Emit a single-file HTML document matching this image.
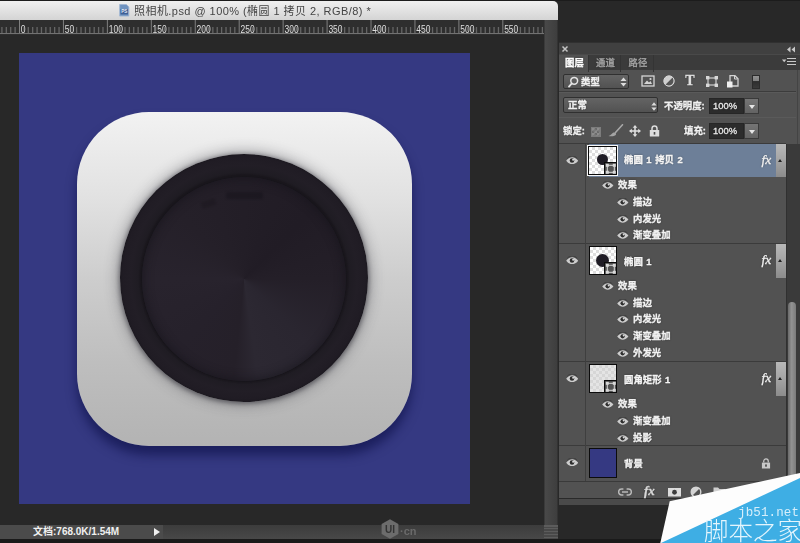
<!DOCTYPE html>
<html lang="zh">
<head>
<meta charset="utf-8">
<title>照相机.psd</title>
<style>
*{margin:0;padding:0;box-sizing:border-box}
html,body{width:800px;height:543px;overflow:hidden;background:#282828}
body{position:relative;font-family:"Liberation Sans","Noto Sans CJK SC",sans-serif;font-size:9.4px;color:#ececec}
#root{left:0;top:0;width:800px;height:543px;overflow:hidden;filter:blur(0.3px)}
.abs{position:absolute}
svg{display:block}
#topline{left:0;top:0;width:800px;height:1px;background:#1c1c1c}
#titlebar{left:0;top:1px;width:558px;height:19px;background:linear-gradient(#f0f0f0,#d4d4d4);border-top-right-radius:5px;color:#4a4a4a;font-size:11px;line-height:19px}
#title{left:134px;top:1px;white-space:nowrap;letter-spacing:0.45px;color:#444}
#ruler{left:0;top:20px}
#vscroll{left:544px;top:20px;width:14px;height:505px;background:linear-gradient(90deg,#494949,#3e3e3e);border-left:1px solid #3a3a3a;border-right:1px solid #333}
#canvas{left:0;top:35px;width:544px;height:490px;background:#282828}
#doc{left:19px;top:53.4px;width:451.2px;height:450.6px;background:#353982;overflow:hidden}
#icon{left:58px;top:58.6px;width:334.5px;height:334px;border-radius:72px;background:linear-gradient(#f2f2f2 0%,#e2e2e2 25%,#cdcdcd 50%,#bebebe 75%,#b3b3b3 100%);box-shadow:0 9px 11px rgba(12,14,70,.62)}
#ring{left:42.5px;top:42.5px;width:248px;height:248px;border-radius:50%;background:radial-gradient(circle at 50% 50%,#1a171d 0,#1a171d 103px,#1f1c23 106px,#221e26 113px,#201c24 121px,#1c1920 124px);box-shadow:0 0 13px 3px rgba(56,56,62,.38),0 1px 4px 1px rgba(24,22,30,.45)}
#disc{left:22px;top:22.5px;width:204px;height:204px;border-radius:50%;background:conic-gradient(from 0deg,#231e27,#211c25 45deg,#241f28 90deg,#2a2630 135deg,#2c2832 172deg,#252029 186deg,#26212b 225deg,#28232d 270deg,#252029 315deg,#231e27);box-shadow:0 0 1.5px 0.5px rgba(20,18,24,.7),inset 0 0 8px 2px rgba(20,18,26,.55)}
#wm{left:84px;top:15.5px;width:37px;height:6.5px;border-radius:2px;background:rgba(18,15,22,.36);filter:blur(1px)}
#wm2{left:59px;top:23px;width:15px;height:6.5px;border-radius:2px;background:rgba(18,15,22,.28);transform:rotate(-18deg);filter:blur(1px)}
#status{left:0;top:525px;width:558px;height:14px;background:linear-gradient(#3c3c3c,#484848);font-size:10px;line-height:14px;color:#f0f0f0}
#status .l{left:0;top:0;width:163px;height:14px;background:#4b4b4b}
#status .t{left:33px;top:0;white-space:nowrap;font-weight:bold}
#grip{left:544px;top:0;width:14px;height:14px;background:repeating-linear-gradient(#5c5c5c 0,#5c5c5c 1.5px,#484848 1.5px,#484848 3px)}
#bottom{left:0;top:539px;width:800px;height:4px;background:#1a1a1a}
/* panel */
#panel{left:559px;top:42px;width:241px;height:463px;background:#525252;overflow:hidden;-webkit-text-stroke:0.3px currentColor;text-shadow:0 0 2px rgba(30,30,30,.6)}
#phead{left:0;top:0;width:241px;height:12px;background:#404040;border-top:1px solid #303030}
#ptabs{left:0;top:12px;width:241px;height:16px;background:#3b3b3b;border-top:1px solid #494949}
.tab{position:absolute;top:0;height:17px;line-height:16px;padding-left:2px;font-size:9.4px;color:#a8a8a8;text-align:center;border-right:1px solid #343434}
.tab.on{background:#525252;color:#fff;font-weight:bold}
.hsep{position:absolute;left:0;width:237px;height:2px;background:#3c3c3c;border-bottom:1px solid #5a5a5a}
.dd{position:absolute;height:15px;border:1px solid #303030;border-radius:2px;background:linear-gradient(#646464,#525252);line-height:14px;font-size:9.4px;color:#f2f2f2;font-weight:bold}
.lbl{position:absolute;white-space:nowrap;font-size:9.4px;font-weight:bold;color:#f0f0f0;line-height:16px}
.inp{position:absolute;width:35px;height:16px;background:#2c2c2c;border:1px solid #262626;color:#e8e8e8;font-size:9.4px;line-height:14px;padding-left:3px}
.btn{position:absolute;width:15px;height:16px;background:linear-gradient(#757575,#636363);border:1px solid #3a3a3a}
.btn i{position:absolute;left:4px;top:6px;border:3px solid transparent;border-top:4px solid #e6e6e6;border-bottom:0}
#list{left:0;top:102px;width:227px;height:338px}
.layer{position:absolute;left:0;width:227px;border-top:1px solid #3b3b3b}
.layer.sel{background:linear-gradient(90deg,#525252 0,#525252 30px,#6d7f98 30px)}
.thumb{position:absolute;left:30.3px;top:2.2px;width:27.3px;border:1.2px solid #0c0c0c;overflow:hidden}
.thumb.tsel{left:29px;top:1.6px;width:29px;outline:1.5px solid #f6f6f6}
.lname{position:absolute;left:65px;word-spacing:1px;top:0;font-size:9.4px;font-weight:bold;color:#f4f4f4;white-space:nowrap}
.fx{position:absolute;left:202.5px;top:0;font-family:"Liberation Serif",serif;font-style:italic;font-size:13.5px;color:#f0f0f0}
.tog{position:absolute;left:217px;top:0;width:9.5px;background:linear-gradient(#b8b8b8,#a6a6a6 45%,#8c8c8c);}
.tog i{position:absolute;left:2px;top:14.5px;border:2.8px solid transparent;border-bottom:3.5px solid #222;border-top:0}
.eff{position:absolute;left:0;width:227px;height:16px}
.ename{position:absolute;top:0;line-height:16px;font-size:9.4px;font-weight:bold;color:#f2f2f2;white-space:nowrap}
.sep{position:absolute;left:0;width:227px;height:1px;background:#3b3b3b}
.vline{position:absolute;top:102px;width:1px;height:338px;background:#3f3f3f}
#track{left:227px;top:102px;width:14px;height:363px;background:#3a3a3a;border-left:1px solid #303030}
#thumbv{left:1px;top:158px;width:8px;height:220px;border-radius:4px;background:linear-gradient(90deg,#6a6a6a,#929292 45%,#7a7a7a)}
#pfoot{left:0;top:439px;width:227px;height:18px;border-top:1px solid #3a3a3a;border-bottom:1px solid #2a2a2a;background:#525252}
#pedge{left:238px;top:28px;width:1px;height:74px;background:#444}
#pfoot2{left:0;top:457px;width:241px;height:6px;background:#4a4a4a}
</style>
</head>
<body>
<div id="root" class="abs">
<div id="topline" class="abs"></div>
<div id="titlebar" class="abs">
<svg class="abs" style="left:119px;top:3px" width="10.5" height="12.5" viewBox="0 0 12 15"><path d="M0.5 0.5 H8.5 L11.5 3.5 V14.5 H0.5 Z" fill="#6f93c0" stroke="#9db4d2" stroke-width="1"/><rect x="1.5" y="6" width="9" height="6.5" fill="#3f6096"/><text x="6" y="11.3" font-family="Liberation Sans, sans-serif" font-size="5.5" font-weight="bold" fill="#e6edf6" text-anchor="middle">PS</text></svg>
<span id="title" class="abs">照相机.psd @ 100% (椭圆 1 拷贝 2, RGB/8) *</span></div>
<svg id="ruler" class="abs" width="544" height="15" viewBox="0 0 544 15"><rect width="544" height="15" fill="#2e2e2e"/><line x1="1.92" y1="7" x2="1.92" y2="14" stroke="#666" stroke-width="1.3"/><line x1="6.32" y1="7" x2="6.32" y2="14" stroke="#666" stroke-width="1.3"/><line x1="10.71" y1="7" x2="10.71" y2="14" stroke="#666" stroke-width="1.3"/><line x1="15.11" y1="7" x2="15.11" y2="14" stroke="#666" stroke-width="1.3"/><line x1="19.50" y1="0" x2="19.50" y2="14" stroke="#808080" stroke-width="1"/><line x1="23.89" y1="7" x2="23.89" y2="14" stroke="#666" stroke-width="1.3"/><line x1="28.29" y1="7" x2="28.29" y2="14" stroke="#666" stroke-width="1.3"/><line x1="32.68" y1="7" x2="32.68" y2="14" stroke="#666" stroke-width="1.3"/><line x1="37.08" y1="7" x2="37.08" y2="14" stroke="#666" stroke-width="1.3"/><line x1="41.47" y1="7" x2="41.47" y2="14" stroke="#666" stroke-width="1.3"/><line x1="45.86" y1="7" x2="45.86" y2="14" stroke="#666" stroke-width="1.3"/><line x1="50.26" y1="7" x2="50.26" y2="14" stroke="#666" stroke-width="1.3"/><line x1="54.65" y1="7" x2="54.65" y2="14" stroke="#666" stroke-width="1.3"/><line x1="59.05" y1="7" x2="59.05" y2="14" stroke="#666" stroke-width="1.3"/><line x1="63.44" y1="0" x2="63.44" y2="14" stroke="#808080" stroke-width="1"/><line x1="67.83" y1="7" x2="67.83" y2="14" stroke="#666" stroke-width="1.3"/><line x1="72.23" y1="7" x2="72.23" y2="14" stroke="#666" stroke-width="1.3"/><line x1="76.62" y1="7" x2="76.62" y2="14" stroke="#666" stroke-width="1.3"/><line x1="81.02" y1="7" x2="81.02" y2="14" stroke="#666" stroke-width="1.3"/><line x1="85.41" y1="7" x2="85.41" y2="14" stroke="#666" stroke-width="1.3"/><line x1="89.80" y1="7" x2="89.80" y2="14" stroke="#666" stroke-width="1.3"/><line x1="94.20" y1="7" x2="94.20" y2="14" stroke="#666" stroke-width="1.3"/><line x1="98.59" y1="7" x2="98.59" y2="14" stroke="#666" stroke-width="1.3"/><line x1="102.99" y1="7" x2="102.99" y2="14" stroke="#666" stroke-width="1.3"/><line x1="107.38" y1="0" x2="107.38" y2="14" stroke="#808080" stroke-width="1"/><line x1="111.77" y1="7" x2="111.77" y2="14" stroke="#666" stroke-width="1.3"/><line x1="116.17" y1="7" x2="116.17" y2="14" stroke="#666" stroke-width="1.3"/><line x1="120.56" y1="7" x2="120.56" y2="14" stroke="#666" stroke-width="1.3"/><line x1="124.96" y1="7" x2="124.96" y2="14" stroke="#666" stroke-width="1.3"/><line x1="129.35" y1="7" x2="129.35" y2="14" stroke="#666" stroke-width="1.3"/><line x1="133.74" y1="7" x2="133.74" y2="14" stroke="#666" stroke-width="1.3"/><line x1="138.14" y1="7" x2="138.14" y2="14" stroke="#666" stroke-width="1.3"/><line x1="142.53" y1="7" x2="142.53" y2="14" stroke="#666" stroke-width="1.3"/><line x1="146.93" y1="7" x2="146.93" y2="14" stroke="#666" stroke-width="1.3"/><line x1="151.32" y1="0" x2="151.32" y2="14" stroke="#808080" stroke-width="1"/><line x1="155.71" y1="7" x2="155.71" y2="14" stroke="#666" stroke-width="1.3"/><line x1="160.11" y1="7" x2="160.11" y2="14" stroke="#666" stroke-width="1.3"/><line x1="164.50" y1="7" x2="164.50" y2="14" stroke="#666" stroke-width="1.3"/><line x1="168.90" y1="7" x2="168.90" y2="14" stroke="#666" stroke-width="1.3"/><line x1="173.29" y1="7" x2="173.29" y2="14" stroke="#666" stroke-width="1.3"/><line x1="177.68" y1="7" x2="177.68" y2="14" stroke="#666" stroke-width="1.3"/><line x1="182.08" y1="7" x2="182.08" y2="14" stroke="#666" stroke-width="1.3"/><line x1="186.47" y1="7" x2="186.47" y2="14" stroke="#666" stroke-width="1.3"/><line x1="190.87" y1="7" x2="190.87" y2="14" stroke="#666" stroke-width="1.3"/><line x1="195.26" y1="0" x2="195.26" y2="14" stroke="#808080" stroke-width="1"/><line x1="199.65" y1="7" x2="199.65" y2="14" stroke="#666" stroke-width="1.3"/><line x1="204.05" y1="7" x2="204.05" y2="14" stroke="#666" stroke-width="1.3"/><line x1="208.44" y1="7" x2="208.44" y2="14" stroke="#666" stroke-width="1.3"/><line x1="212.84" y1="7" x2="212.84" y2="14" stroke="#666" stroke-width="1.3"/><line x1="217.23" y1="7" x2="217.23" y2="14" stroke="#666" stroke-width="1.3"/><line x1="221.62" y1="7" x2="221.62" y2="14" stroke="#666" stroke-width="1.3"/><line x1="226.02" y1="7" x2="226.02" y2="14" stroke="#666" stroke-width="1.3"/><line x1="230.41" y1="7" x2="230.41" y2="14" stroke="#666" stroke-width="1.3"/><line x1="234.81" y1="7" x2="234.81" y2="14" stroke="#666" stroke-width="1.3"/><line x1="239.20" y1="0" x2="239.20" y2="14" stroke="#808080" stroke-width="1"/><line x1="243.59" y1="7" x2="243.59" y2="14" stroke="#666" stroke-width="1.3"/><line x1="247.99" y1="7" x2="247.99" y2="14" stroke="#666" stroke-width="1.3"/><line x1="252.38" y1="7" x2="252.38" y2="14" stroke="#666" stroke-width="1.3"/><line x1="256.78" y1="7" x2="256.78" y2="14" stroke="#666" stroke-width="1.3"/><line x1="261.17" y1="7" x2="261.17" y2="14" stroke="#666" stroke-width="1.3"/><line x1="265.56" y1="7" x2="265.56" y2="14" stroke="#666" stroke-width="1.3"/><line x1="269.96" y1="7" x2="269.96" y2="14" stroke="#666" stroke-width="1.3"/><line x1="274.35" y1="7" x2="274.35" y2="14" stroke="#666" stroke-width="1.3"/><line x1="278.75" y1="7" x2="278.75" y2="14" stroke="#666" stroke-width="1.3"/><line x1="283.14" y1="0" x2="283.14" y2="14" stroke="#808080" stroke-width="1"/><line x1="287.53" y1="7" x2="287.53" y2="14" stroke="#666" stroke-width="1.3"/><line x1="291.93" y1="7" x2="291.93" y2="14" stroke="#666" stroke-width="1.3"/><line x1="296.32" y1="7" x2="296.32" y2="14" stroke="#666" stroke-width="1.3"/><line x1="300.72" y1="7" x2="300.72" y2="14" stroke="#666" stroke-width="1.3"/><line x1="305.11" y1="7" x2="305.11" y2="14" stroke="#666" stroke-width="1.3"/><line x1="309.50" y1="7" x2="309.50" y2="14" stroke="#666" stroke-width="1.3"/><line x1="313.90" y1="7" x2="313.90" y2="14" stroke="#666" stroke-width="1.3"/><line x1="318.29" y1="7" x2="318.29" y2="14" stroke="#666" stroke-width="1.3"/><line x1="322.69" y1="7" x2="322.69" y2="14" stroke="#666" stroke-width="1.3"/><line x1="327.08" y1="0" x2="327.08" y2="14" stroke="#808080" stroke-width="1"/><line x1="331.47" y1="7" x2="331.47" y2="14" stroke="#666" stroke-width="1.3"/><line x1="335.87" y1="7" x2="335.87" y2="14" stroke="#666" stroke-width="1.3"/><line x1="340.26" y1="7" x2="340.26" y2="14" stroke="#666" stroke-width="1.3"/><line x1="344.66" y1="7" x2="344.66" y2="14" stroke="#666" stroke-width="1.3"/><line x1="349.05" y1="7" x2="349.05" y2="14" stroke="#666" stroke-width="1.3"/><line x1="353.44" y1="7" x2="353.44" y2="14" stroke="#666" stroke-width="1.3"/><line x1="357.84" y1="7" x2="357.84" y2="14" stroke="#666" stroke-width="1.3"/><line x1="362.23" y1="7" x2="362.23" y2="14" stroke="#666" stroke-width="1.3"/><line x1="366.63" y1="7" x2="366.63" y2="14" stroke="#666" stroke-width="1.3"/><line x1="371.02" y1="0" x2="371.02" y2="14" stroke="#808080" stroke-width="1"/><line x1="375.41" y1="7" x2="375.41" y2="14" stroke="#666" stroke-width="1.3"/><line x1="379.81" y1="7" x2="379.81" y2="14" stroke="#666" stroke-width="1.3"/><line x1="384.20" y1="7" x2="384.20" y2="14" stroke="#666" stroke-width="1.3"/><line x1="388.60" y1="7" x2="388.60" y2="14" stroke="#666" stroke-width="1.3"/><line x1="392.99" y1="7" x2="392.99" y2="14" stroke="#666" stroke-width="1.3"/><line x1="397.38" y1="7" x2="397.38" y2="14" stroke="#666" stroke-width="1.3"/><line x1="401.78" y1="7" x2="401.78" y2="14" stroke="#666" stroke-width="1.3"/><line x1="406.17" y1="7" x2="406.17" y2="14" stroke="#666" stroke-width="1.3"/><line x1="410.57" y1="7" x2="410.57" y2="14" stroke="#666" stroke-width="1.3"/><line x1="414.96" y1="0" x2="414.96" y2="14" stroke="#808080" stroke-width="1"/><line x1="419.35" y1="7" x2="419.35" y2="14" stroke="#666" stroke-width="1.3"/><line x1="423.75" y1="7" x2="423.75" y2="14" stroke="#666" stroke-width="1.3"/><line x1="428.14" y1="7" x2="428.14" y2="14" stroke="#666" stroke-width="1.3"/><line x1="432.54" y1="7" x2="432.54" y2="14" stroke="#666" stroke-width="1.3"/><line x1="436.93" y1="7" x2="436.93" y2="14" stroke="#666" stroke-width="1.3"/><line x1="441.32" y1="7" x2="441.32" y2="14" stroke="#666" stroke-width="1.3"/><line x1="445.72" y1="7" x2="445.72" y2="14" stroke="#666" stroke-width="1.3"/><line x1="450.11" y1="7" x2="450.11" y2="14" stroke="#666" stroke-width="1.3"/><line x1="454.51" y1="7" x2="454.51" y2="14" stroke="#666" stroke-width="1.3"/><line x1="458.90" y1="0" x2="458.90" y2="14" stroke="#808080" stroke-width="1"/><line x1="463.29" y1="7" x2="463.29" y2="14" stroke="#666" stroke-width="1.3"/><line x1="467.69" y1="7" x2="467.69" y2="14" stroke="#666" stroke-width="1.3"/><line x1="472.08" y1="7" x2="472.08" y2="14" stroke="#666" stroke-width="1.3"/><line x1="476.48" y1="7" x2="476.48" y2="14" stroke="#666" stroke-width="1.3"/><line x1="480.87" y1="7" x2="480.87" y2="14" stroke="#666" stroke-width="1.3"/><line x1="485.26" y1="7" x2="485.26" y2="14" stroke="#666" stroke-width="1.3"/><line x1="489.66" y1="7" x2="489.66" y2="14" stroke="#666" stroke-width="1.3"/><line x1="494.05" y1="7" x2="494.05" y2="14" stroke="#666" stroke-width="1.3"/><line x1="498.45" y1="7" x2="498.45" y2="14" stroke="#666" stroke-width="1.3"/><line x1="502.84" y1="0" x2="502.84" y2="14" stroke="#808080" stroke-width="1"/><line x1="507.23" y1="7" x2="507.23" y2="14" stroke="#666" stroke-width="1.3"/><line x1="511.63" y1="7" x2="511.63" y2="14" stroke="#666" stroke-width="1.3"/><line x1="516.02" y1="7" x2="516.02" y2="14" stroke="#666" stroke-width="1.3"/><line x1="520.42" y1="7" x2="520.42" y2="14" stroke="#666" stroke-width="1.3"/><line x1="524.81" y1="7" x2="524.81" y2="14" stroke="#666" stroke-width="1.3"/><line x1="529.20" y1="7" x2="529.20" y2="14" stroke="#666" stroke-width="1.3"/><line x1="533.60" y1="7" x2="533.60" y2="14" stroke="#666" stroke-width="1.3"/><line x1="537.99" y1="7" x2="537.99" y2="14" stroke="#666" stroke-width="1.3"/><line x1="542.39" y1="7" x2="542.39" y2="14" stroke="#666" stroke-width="1.3"/><g font-family="Liberation Sans, sans-serif" font-size="11" fill="#dedede" stroke="#2e2e2e" stroke-width="1.6" paint-order="stroke"><text x="20.80" y="12.6" textLength="4.8" lengthAdjust="spacingAndGlyphs">0</text><text x="64.74" y="12.6" textLength="9.5" lengthAdjust="spacingAndGlyphs">50</text><text x="108.68" y="12.6" textLength="14.2" lengthAdjust="spacingAndGlyphs">100</text><text x="152.62" y="12.6" textLength="14.2" lengthAdjust="spacingAndGlyphs">150</text><text x="196.56" y="12.6" textLength="14.2" lengthAdjust="spacingAndGlyphs">200</text><text x="240.50" y="12.6" textLength="14.2" lengthAdjust="spacingAndGlyphs">250</text><text x="284.44" y="12.6" textLength="14.2" lengthAdjust="spacingAndGlyphs">300</text><text x="328.38" y="12.6" textLength="14.2" lengthAdjust="spacingAndGlyphs">350</text><text x="372.32" y="12.6" textLength="14.2" lengthAdjust="spacingAndGlyphs">400</text><text x="416.26" y="12.6" textLength="14.2" lengthAdjust="spacingAndGlyphs">450</text><text x="460.20" y="12.6" textLength="14.2" lengthAdjust="spacingAndGlyphs">500</text><text x="504.14" y="12.6" textLength="14.2" lengthAdjust="spacingAndGlyphs">550</text></g><rect y="13" width="544" height="1" fill="#727272"/></svg>
<div id="canvas" class="abs"></div>
<div id="vscroll" class="abs"></div>
<div id="doc" class="abs">
 <div id="icon" class="abs">
  <div id="ring" class="abs">
   <div id="disc" class="abs"><div id="wm" class="abs"></div><div id="wm2" class="abs"></div></div>
  </div>
 </div>
</div>
<div id="status" class="abs"><div class="l abs"></div><span class="t abs">文档:768.0K/1.54M</span>
<span class="abs" style="left:154px;top:3px;border:4px solid transparent;border-left:6px solid #f0f0f0;border-right:0"></span>
<div id="grip" class="abs"></div></div>
<div id="bottom" class="abs"></div>
<svg id="uicn" class="abs" style="left:379px;top:518px" width="40" height="22" viewBox="0 0 40 22"><path d="M11 1.2 L19.4 6 V16 L11 20.8 L2.6 16 V6 Z" fill="#6c6c6c"/><text x="11" y="14.6" text-anchor="middle" font-family="Liberation Sans, sans-serif" font-weight="bold" font-size="10" fill="#333">UI</text><text x="21" y="17" font-family="Liberation Sans, sans-serif" font-weight="bold" font-size="11" fill="#6a6a6a">·cn</text></svg>
<div id="panel" class="abs">
 <div id="phead" class="abs"><svg class="abs" style="left:2px;top:2px" width="8" height="8" viewBox="0 0 8 8"><path d="M1.5 1.5 L6.5 6.5 M6.5 1.5 L1.5 6.5" stroke="#c4c4c4" stroke-width="1.5"/></svg>
<svg class="abs" style="left:227px;top:3px" width="10" height="7" viewBox="0 0 10 7"><path d="M4.5 0.5 L1 3.5 L4.5 6.5 Z M9 0.5 L5.5 3.5 L9 6.5 Z" fill="#c8c8c8"/></svg></div>
 <div id="ptabs" class="abs">
  <span class="tab on" style="left:0;width:30px">图层</span>
  <span class="tab" style="left:30px;width:32px">通道</span>
  <span class="tab" style="left:62px;width:33px">路径</span><svg class="abs" style="left:223px;top:2px" width="15" height="9" viewBox="0 0 15 9"><path d="M0 2.5 H4.4 L2.2 5.2 Z" fill="#c8c8c8"/><path d="M5 1.5 H14 M5 4.5 H14 M5 7.5 H14" stroke="#c8c8c8" stroke-width="1.2"/></svg>
 </div>
 <div class="dd" style="left:4px;top:32px;width:66px"></div>
 <span class="lbl" style="left:22px;top:31.5px">类型</span>
 <div class="hsep" style="top:49px"></div>
 <div class="dd" style="left:4px;top:55px;width:95px;height:16px"></div>
 <span class="lbl" style="left:9px;top:55px">正常</span>
 <span class="lbl" style="left:105px;top:56px">不透明度:</span>
 <div class="inp" style="left:150px;top:56px">100%</div><div class="btn" style="left:185px;top:56px"><i></i></div>
 <div class="hsep" style="top:75px;height:1px"></div>
 <span class="lbl" style="left:4px;top:81px">锁定:</span>
 <span class="lbl" style="left:125px;top:81px">填充:</span>
 <div class="inp" style="left:150px;top:81px">100%</div><div class="btn" style="left:185px;top:81px"><i></i></div>

 <svg class="abs" style="left:9px;top:34px" width="11" height="12" viewBox="0 0 11 12"><circle cx="6.2" cy="4.8" r="3.4" fill="none" stroke="#e4e4e4" stroke-width="1.5"/><path d="M3.8 7.4 L1 10.6" stroke="#e4e4e4" stroke-width="1.8" stroke-linecap="round"/></svg>
 <svg class="abs" style="left:61px;top:35px" width="7" height="10" viewBox="0 0 7 10"><path d="M3.5 0.5 L6.5 4 H0.5 Z M3.5 9.5 L6.5 6 H0.5 Z" fill="#dcdcdc"/></svg>
 <svg class="abs" style="left:82px;top:33px" width="14" height="12" viewBox="0 0 14 12"><rect x="1" y="1" width="12" height="10" fill="none" stroke="#d4d4d4" stroke-width="1.3"/><path d="M3 9 L6 5.5 L8 7.5 L9.5 6 L11 9 Z" fill="#d4d4d4"/><circle cx="9.5" cy="4" r="1.1" fill="#d4d4d4"/></svg>
 <svg class="abs" style="left:104px;top:33px" width="12" height="12" viewBox="0 0 12 12"><circle cx="6" cy="6" r="5.2" fill="#cfcfcf"/><path d="M2.6 9.6 A5 5 0 0 0 9.6 2.6 Z" fill="#555"/><circle cx="6" cy="6" r="5.2" fill="none" stroke="#d6d6d6" stroke-width="1"/></svg>
 <span class="abs" style="left:125px;top:31px;width:12px;text-align:center;font-family:'Liberation Serif',serif;font-weight:bold;font-size:14px;line-height:16px;color:#dedede">T</span>
 <svg class="abs" style="left:147px;top:34px" width="12" height="11" viewBox="0 0 12 11"><rect x="2" y="2" width="8" height="7" fill="none" stroke="#d0d0d0" stroke-width="1.2"/><rect x="0" y="0" width="3.4" height="3.4" fill="#d8d8d8"/><rect x="8.6" y="0" width="3.4" height="3.4" fill="#d8d8d8"/><rect x="0" y="7.6" width="3.4" height="3.4" fill="#d8d8d8"/><rect x="8.6" y="7.6" width="3.4" height="3.4" fill="#d8d8d8"/></svg>
 <svg class="abs" style="left:168px;top:33px" width="12" height="13" viewBox="0 0 12 13"><path d="M3 0.7 H8 L11 3.7 V11 H3 Z" fill="none" stroke="#d4d4d4" stroke-width="1.3"/><path d="M7.5 1 V4 H10.5" fill="none" stroke="#d4d4d4" stroke-width="1"/><rect x="0" y="6.5" width="5.5" height="6" fill="#f0f0f0"/></svg>
 <span class="abs" style="left:193px;top:33px;width:8px;height:14px;border:1px solid #2c2c2c;background:linear-gradient(#929292 0,#808080 42%,#2e2e2e 46%,#3a3a3a 100%)"></span>
 <svg class="abs" style="left:92px;top:60px" width="6" height="9" viewBox="0 0 6 9"><path d="M3 0.3 L5.6 3.4 H0.4 Z M3 8.7 L5.6 5.6 H0.4 Z" fill="#dcdcdc"/></svg>

 <span class="abs" style="left:32px;top:85px;width:10px;height:10px;background-color:#8c8c8c;background-image:linear-gradient(45deg,#6a6a6a 25%,transparent 25%,transparent 75%,#6a6a6a 75%),linear-gradient(45deg,#6a6a6a 25%,transparent 25%,transparent 75%,#6a6a6a 75%);background-size:5px 5px;background-position:0 0,2.5px 2.5px;border:1px solid #7c7c7c"></span>
 <svg class="abs" style="left:49px;top:82px" width="16" height="13" viewBox="0 0 16 13"><path d="M14.5 0.8 L7.5 8.5" stroke="#a8a8a8" stroke-width="1.6" stroke-linecap="round"/><path d="M0.5 12 C3 11.5 4 9.5 5.5 8.6 C7 8 8.3 9 8 10.4 C7.6 12 4 12.6 0.5 12 Z" fill="#a4a4a4"/></svg>
 <svg class="abs" style="left:70px;top:83px" width="12" height="12" viewBox="0 0 12 12"><path d="M6 0 L8.3 2.8 H6.8 V5.2 H9.2 V3.7 L12 6 L9.2 8.3 V6.8 H6.8 V9.2 H8.3 L6 12 L3.7 9.2 H5.2 V6.8 H2.8 V8.3 L0 6 L2.8 3.7 V5.2 H5.2 V2.8 H3.7 Z" fill="#dedede"/></svg>
 <svg class="abs" style="left:90px;top:83px" width="11" height="12" viewBox="0 0 11 12"><path d="M3 5.5 V3.6 A2.5 2.6 0 0 1 8 3.6 V5.5" fill="none" stroke="#dcdcdc" stroke-width="1.5"/><rect x="0.8" y="5" width="9.4" height="6.6" rx="0.6" fill="#dcdcdc"/><rect x="4.7" y="7" width="1.6" height="2.6" fill="#4a4a4a"/></svg>
 <div id="list" class="abs" style="top:0;height:440px"><div class="layer sel" style="top:101px;height:34px"><span class="abs" style="left:6.80px;top:11.91px;width:12.4px;height:8.58px"><svg class="eye" width="12.4" height="8.58" viewBox="0 0 13 9"><path d="M1.2 2.6 C3 0.4 5 -0.1 6.5 -0.1 C8 -0.1 10 0.4 11.8 2.6" fill="none" stroke="#3c3c3c" stroke-width="1"/><path d="M0.2 5 C2.4 2.2 4.6 1.4 6.5 1.4 C8.4 1.4 10.6 2.2 12.8 5 C10.6 7.8 8.4 8.6 6.5 8.6 C4.4 8.6 2.4 7.8 0.2 5 Z" fill="#cdcdcd"/><circle cx="6.3" cy="4.8" r="2.4" fill="#2e2e2e"/><circle cx="7.5" cy="4" r="1.1" fill="#d8d8d8"/></svg></span><div class="thumb tsel" style="height:29.2px;background-color:#fff;background-image:linear-gradient(45deg,#dedede 25%,transparent 25%,transparent 75%,#dedede 75%),linear-gradient(45deg,#dedede 25%,transparent 25%,transparent 75%,#dedede 75%);background-size:6px 6px;background-position:0 0,3px 3px"><span class="abs" style="left:8.20px;top:7.70px;width:11.2px;height:11.2px;border-radius:50%;background:#1f1c25"></span><svg class="abs" style="right:-0.5px;bottom:-0.5px" width="12.5" height="12.5" viewBox="-0.5 -0.5 12.5 12.5"><rect x="-0.5" y="-0.5" width="12.5" height="12.5" fill="#0c0c0c"/><rect x="0.6" y="0.6" width="11.4" height="11.4" fill="#525252"/><rect x="2.8" y="2.8" width="7" height="7" fill="none" stroke="#d8d8d8" stroke-width="1"/><rect x="1.3" y="1.3" width="3" height="3" fill="#d8d8d8"/><rect x="8.3" y="1.3" width="3" height="3" fill="#d8d8d8"/><rect x="1.3" y="8.3" width="3" height="3" fill="#d8d8d8"/><rect x="8.3" y="8.3" width="3" height="3" fill="#d8d8d8"/></svg></div><span class="lname" style="line-height:31.5px">椭圆 1 拷贝 2</span><span class="fx" style="line-height:31.5px">fx</span><span class="tog" style="height:33px"><i></i></span></div><div class="eff" style="top:135px"><span class="abs" style="left:43.20px;top:4.28px;width:11.6px;height:8.03px"><svg class="eye" width="11.6" height="8.03" viewBox="0 0 13 9"><path d="M1.2 2.6 C3 0.4 5 -0.1 6.5 -0.1 C8 -0.1 10 0.4 11.8 2.6" fill="none" stroke="#3c3c3c" stroke-width="1"/><path d="M0.2 5 C2.4 2.2 4.6 1.4 6.5 1.4 C8.4 1.4 10.6 2.2 12.8 5 C10.6 7.8 8.4 8.6 6.5 8.6 C4.4 8.6 2.4 7.8 0.2 5 Z" fill="#cdcdcd"/><circle cx="6.3" cy="4.8" r="2.4" fill="#2e2e2e"/><circle cx="7.5" cy="4" r="1.1" fill="#d8d8d8"/></svg></span><span class="ename" style="left:59px">效果</span></div><div class="eff" style="top:152px"><span class="abs" style="left:58.20px;top:4.28px;width:11.6px;height:8.03px"><svg class="eye" width="11.6" height="8.03" viewBox="0 0 13 9"><path d="M1.2 2.6 C3 0.4 5 -0.1 6.5 -0.1 C8 -0.1 10 0.4 11.8 2.6" fill="none" stroke="#3c3c3c" stroke-width="1"/><path d="M0.2 5 C2.4 2.2 4.6 1.4 6.5 1.4 C8.4 1.4 10.6 2.2 12.8 5 C10.6 7.8 8.4 8.6 6.5 8.6 C4.4 8.6 2.4 7.8 0.2 5 Z" fill="#cdcdcd"/><circle cx="6.3" cy="4.8" r="2.4" fill="#2e2e2e"/><circle cx="7.5" cy="4" r="1.1" fill="#d8d8d8"/></svg></span><span class="ename" style="left:74px">描边</span></div><div class="eff" style="top:168.5px"><span class="abs" style="left:58.20px;top:4.28px;width:11.6px;height:8.03px"><svg class="eye" width="11.6" height="8.03" viewBox="0 0 13 9"><path d="M1.2 2.6 C3 0.4 5 -0.1 6.5 -0.1 C8 -0.1 10 0.4 11.8 2.6" fill="none" stroke="#3c3c3c" stroke-width="1"/><path d="M0.2 5 C2.4 2.2 4.6 1.4 6.5 1.4 C8.4 1.4 10.6 2.2 12.8 5 C10.6 7.8 8.4 8.6 6.5 8.6 C4.4 8.6 2.4 7.8 0.2 5 Z" fill="#cdcdcd"/><circle cx="6.3" cy="4.8" r="2.4" fill="#2e2e2e"/><circle cx="7.5" cy="4" r="1.1" fill="#d8d8d8"/></svg></span><span class="ename" style="left:74px">内发光</span></div><div class="eff" style="top:185px"><span class="abs" style="left:58.20px;top:4.28px;width:11.6px;height:8.03px"><svg class="eye" width="11.6" height="8.03" viewBox="0 0 13 9"><path d="M1.2 2.6 C3 0.4 5 -0.1 6.5 -0.1 C8 -0.1 10 0.4 11.8 2.6" fill="none" stroke="#3c3c3c" stroke-width="1"/><path d="M0.2 5 C2.4 2.2 4.6 1.4 6.5 1.4 C8.4 1.4 10.6 2.2 12.8 5 C10.6 7.8 8.4 8.6 6.5 8.6 C4.4 8.6 2.4 7.8 0.2 5 Z" fill="#cdcdcd"/><circle cx="6.3" cy="4.8" r="2.4" fill="#2e2e2e"/><circle cx="7.5" cy="4" r="1.1" fill="#d8d8d8"/></svg></span><span class="ename" style="left:74px">渐变叠加</span></div><div class="layer" style="top:201px;height:35px"><span class="abs" style="left:6.80px;top:11.91px;width:12.4px;height:8.58px"><svg class="eye" width="12.4" height="8.58" viewBox="0 0 13 9"><path d="M1.2 2.6 C3 0.4 5 -0.1 6.5 -0.1 C8 -0.1 10 0.4 11.8 2.6" fill="none" stroke="#3c3c3c" stroke-width="1"/><path d="M0.2 5 C2.4 2.2 4.6 1.4 6.5 1.4 C8.4 1.4 10.6 2.2 12.8 5 C10.6 7.8 8.4 8.6 6.5 8.6 C4.4 8.6 2.4 7.8 0.2 5 Z" fill="#cdcdcd"/><circle cx="6.3" cy="4.8" r="2.4" fill="#2e2e2e"/><circle cx="7.5" cy="4" r="1.1" fill="#d8d8d8"/></svg></span><div class="thumb" style="height:29px;background-color:#fff;background-image:linear-gradient(45deg,#dedede 25%,transparent 25%,transparent 75%,#dedede 75%),linear-gradient(45deg,#dedede 25%,transparent 25%,transparent 75%,#dedede 75%);background-size:6px 6px;background-position:0 0,3px 3px"><span class="abs" style="left:5.75px;top:6.50px;width:13.4px;height:13.4px;border-radius:50%;background:#1f1c25"></span><svg class="abs" style="right:-0.5px;bottom:-0.5px" width="12.5" height="12.5" viewBox="-0.5 -0.5 12.5 12.5"><rect x="-0.5" y="-0.5" width="12.5" height="12.5" fill="#0c0c0c"/><rect x="0.6" y="0.6" width="11.4" height="11.4" fill="#525252"/><rect x="2.8" y="2.8" width="7" height="7" fill="none" stroke="#d8d8d8" stroke-width="1"/><rect x="1.3" y="1.3" width="3" height="3" fill="#d8d8d8"/><rect x="8.3" y="1.3" width="3" height="3" fill="#d8d8d8"/><rect x="1.3" y="8.3" width="3" height="3" fill="#d8d8d8"/><rect x="8.3" y="8.3" width="3" height="3" fill="#d8d8d8"/></svg></div><span class="lname" style="line-height:35.9px">椭圆 1</span><span class="fx" style="line-height:32.5px">fx</span><span class="tog" style="height:34px"><i></i></span></div><div class="eff" style="top:236px"><span class="abs" style="left:43.20px;top:4.28px;width:11.6px;height:8.03px"><svg class="eye" width="11.6" height="8.03" viewBox="0 0 13 9"><path d="M1.2 2.6 C3 0.4 5 -0.1 6.5 -0.1 C8 -0.1 10 0.4 11.8 2.6" fill="none" stroke="#3c3c3c" stroke-width="1"/><path d="M0.2 5 C2.4 2.2 4.6 1.4 6.5 1.4 C8.4 1.4 10.6 2.2 12.8 5 C10.6 7.8 8.4 8.6 6.5 8.6 C4.4 8.6 2.4 7.8 0.2 5 Z" fill="#cdcdcd"/><circle cx="6.3" cy="4.8" r="2.4" fill="#2e2e2e"/><circle cx="7.5" cy="4" r="1.1" fill="#d8d8d8"/></svg></span><span class="ename" style="left:59px">效果</span></div><div class="eff" style="top:252.5px"><span class="abs" style="left:58.20px;top:4.28px;width:11.6px;height:8.03px"><svg class="eye" width="11.6" height="8.03" viewBox="0 0 13 9"><path d="M1.2 2.6 C3 0.4 5 -0.1 6.5 -0.1 C8 -0.1 10 0.4 11.8 2.6" fill="none" stroke="#3c3c3c" stroke-width="1"/><path d="M0.2 5 C2.4 2.2 4.6 1.4 6.5 1.4 C8.4 1.4 10.6 2.2 12.8 5 C10.6 7.8 8.4 8.6 6.5 8.6 C4.4 8.6 2.4 7.8 0.2 5 Z" fill="#cdcdcd"/><circle cx="6.3" cy="4.8" r="2.4" fill="#2e2e2e"/><circle cx="7.5" cy="4" r="1.1" fill="#d8d8d8"/></svg></span><span class="ename" style="left:74px">描边</span></div><div class="eff" style="top:269px"><span class="abs" style="left:58.20px;top:4.28px;width:11.6px;height:8.03px"><svg class="eye" width="11.6" height="8.03" viewBox="0 0 13 9"><path d="M1.2 2.6 C3 0.4 5 -0.1 6.5 -0.1 C8 -0.1 10 0.4 11.8 2.6" fill="none" stroke="#3c3c3c" stroke-width="1"/><path d="M0.2 5 C2.4 2.2 4.6 1.4 6.5 1.4 C8.4 1.4 10.6 2.2 12.8 5 C10.6 7.8 8.4 8.6 6.5 8.6 C4.4 8.6 2.4 7.8 0.2 5 Z" fill="#cdcdcd"/><circle cx="6.3" cy="4.8" r="2.4" fill="#2e2e2e"/><circle cx="7.5" cy="4" r="1.1" fill="#d8d8d8"/></svg></span><span class="ename" style="left:74px">内发光</span></div><div class="eff" style="top:286px"><span class="abs" style="left:58.20px;top:4.28px;width:11.6px;height:8.03px"><svg class="eye" width="11.6" height="8.03" viewBox="0 0 13 9"><path d="M1.2 2.6 C3 0.4 5 -0.1 6.5 -0.1 C8 -0.1 10 0.4 11.8 2.6" fill="none" stroke="#3c3c3c" stroke-width="1"/><path d="M0.2 5 C2.4 2.2 4.6 1.4 6.5 1.4 C8.4 1.4 10.6 2.2 12.8 5 C10.6 7.8 8.4 8.6 6.5 8.6 C4.4 8.6 2.4 7.8 0.2 5 Z" fill="#cdcdcd"/><circle cx="6.3" cy="4.8" r="2.4" fill="#2e2e2e"/><circle cx="7.5" cy="4" r="1.1" fill="#d8d8d8"/></svg></span><span class="ename" style="left:74px">渐变叠加</span></div><div class="eff" style="top:303px"><span class="abs" style="left:58.20px;top:4.28px;width:11.6px;height:8.03px"><svg class="eye" width="11.6" height="8.03" viewBox="0 0 13 9"><path d="M1.2 2.6 C3 0.4 5 -0.1 6.5 -0.1 C8 -0.1 10 0.4 11.8 2.6" fill="none" stroke="#3c3c3c" stroke-width="1"/><path d="M0.2 5 C2.4 2.2 4.6 1.4 6.5 1.4 C8.4 1.4 10.6 2.2 12.8 5 C10.6 7.8 8.4 8.6 6.5 8.6 C4.4 8.6 2.4 7.8 0.2 5 Z" fill="#cdcdcd"/><circle cx="6.3" cy="4.8" r="2.4" fill="#2e2e2e"/><circle cx="7.5" cy="4" r="1.1" fill="#d8d8d8"/></svg></span><span class="ename" style="left:74px">外发光</span></div><div class="layer" style="top:319px;height:35px"><span class="abs" style="left:6.80px;top:11.91px;width:12.4px;height:8.58px"><svg class="eye" width="12.4" height="8.58" viewBox="0 0 13 9"><path d="M1.2 2.6 C3 0.4 5 -0.1 6.5 -0.1 C8 -0.1 10 0.4 11.8 2.6" fill="none" stroke="#3c3c3c" stroke-width="1"/><path d="M0.2 5 C2.4 2.2 4.6 1.4 6.5 1.4 C8.4 1.4 10.6 2.2 12.8 5 C10.6 7.8 8.4 8.6 6.5 8.6 C4.4 8.6 2.4 7.8 0.2 5 Z" fill="#cdcdcd"/><circle cx="6.3" cy="4.8" r="2.4" fill="#2e2e2e"/><circle cx="7.5" cy="4" r="1.1" fill="#d8d8d8"/></svg></span><div class="thumb" style="height:29px;background-color:#e4e4e4;background-image:linear-gradient(45deg,#d6d6d6 25%,transparent 25%,transparent 75%,#d6d6d6 75%),linear-gradient(45deg,#d6d6d6 25%,transparent 25%,transparent 75%,#d6d6d6 75%);background-size:6px 6px;background-position:0 0,3px 3px"><svg class="abs" style="right:-0.5px;bottom:-0.5px" width="12.5" height="12.5" viewBox="-0.5 -0.5 12.5 12.5"><rect x="-0.5" y="-0.5" width="12.5" height="12.5" fill="#0c0c0c"/><rect x="0.6" y="0.6" width="11.4" height="11.4" fill="#525252"/><rect x="2.8" y="2.8" width="7" height="7" fill="none" stroke="#d8d8d8" stroke-width="1"/><rect x="1.3" y="1.3" width="3" height="3" fill="#d8d8d8"/><rect x="8.3" y="1.3" width="3" height="3" fill="#d8d8d8"/><rect x="1.3" y="8.3" width="3" height="3" fill="#d8d8d8"/><rect x="8.3" y="8.3" width="3" height="3" fill="#d8d8d8"/></svg></div><span class="lname" style="line-height:35.9px">圆角矩形 1</span><span class="fx" style="line-height:32.5px">fx</span><span class="tog" style="height:34px"><i></i></span></div><div class="eff" style="top:354px"><span class="abs" style="left:43.20px;top:4.28px;width:11.6px;height:8.03px"><svg class="eye" width="11.6" height="8.03" viewBox="0 0 13 9"><path d="M1.2 2.6 C3 0.4 5 -0.1 6.5 -0.1 C8 -0.1 10 0.4 11.8 2.6" fill="none" stroke="#3c3c3c" stroke-width="1"/><path d="M0.2 5 C2.4 2.2 4.6 1.4 6.5 1.4 C8.4 1.4 10.6 2.2 12.8 5 C10.6 7.8 8.4 8.6 6.5 8.6 C4.4 8.6 2.4 7.8 0.2 5 Z" fill="#cdcdcd"/><circle cx="6.3" cy="4.8" r="2.4" fill="#2e2e2e"/><circle cx="7.5" cy="4" r="1.1" fill="#d8d8d8"/></svg></span><span class="ename" style="left:59px">效果</span></div><div class="eff" style="top:371px"><span class="abs" style="left:58.20px;top:4.28px;width:11.6px;height:8.03px"><svg class="eye" width="11.6" height="8.03" viewBox="0 0 13 9"><path d="M1.2 2.6 C3 0.4 5 -0.1 6.5 -0.1 C8 -0.1 10 0.4 11.8 2.6" fill="none" stroke="#3c3c3c" stroke-width="1"/><path d="M0.2 5 C2.4 2.2 4.6 1.4 6.5 1.4 C8.4 1.4 10.6 2.2 12.8 5 C10.6 7.8 8.4 8.6 6.5 8.6 C4.4 8.6 2.4 7.8 0.2 5 Z" fill="#cdcdcd"/><circle cx="6.3" cy="4.8" r="2.4" fill="#2e2e2e"/><circle cx="7.5" cy="4" r="1.1" fill="#d8d8d8"/></svg></span><span class="ename" style="left:74px">渐变叠加</span></div><div class="eff" style="top:387.5px"><span class="abs" style="left:58.20px;top:4.28px;width:11.6px;height:8.03px"><svg class="eye" width="11.6" height="8.03" viewBox="0 0 13 9"><path d="M1.2 2.6 C3 0.4 5 -0.1 6.5 -0.1 C8 -0.1 10 0.4 11.8 2.6" fill="none" stroke="#3c3c3c" stroke-width="1"/><path d="M0.2 5 C2.4 2.2 4.6 1.4 6.5 1.4 C8.4 1.4 10.6 2.2 12.8 5 C10.6 7.8 8.4 8.6 6.5 8.6 C4.4 8.6 2.4 7.8 0.2 5 Z" fill="#cdcdcd"/><circle cx="6.3" cy="4.8" r="2.4" fill="#2e2e2e"/><circle cx="7.5" cy="4" r="1.1" fill="#d8d8d8"/></svg></span><span class="ename" style="left:74px">投影</span></div><div class="layer" style="top:403px;height:35.5px"><span class="abs" style="left:6.80px;top:11.91px;width:12.4px;height:8.58px"><svg class="eye" width="12.4" height="8.58" viewBox="0 0 13 9"><path d="M1.2 2.6 C3 0.4 5 -0.1 6.5 -0.1 C8 -0.1 10 0.4 11.8 2.6" fill="none" stroke="#3c3c3c" stroke-width="1"/><path d="M0.2 5 C2.4 2.2 4.6 1.4 6.5 1.4 C8.4 1.4 10.6 2.2 12.8 5 C10.6 7.8 8.4 8.6 6.5 8.6 C4.4 8.6 2.4 7.8 0.2 5 Z" fill="#cdcdcd"/><circle cx="6.3" cy="4.8" r="2.4" fill="#2e2e2e"/><circle cx="7.5" cy="4" r="1.1" fill="#d8d8d8"/></svg></span><div class="thumb" style="height:29.5px;background:#353982"></div><span class="lname" style="line-height:35.0px">背景</span><svg class="abs" style="left:202px;top:12px" width="10" height="11" viewBox="0 0 11 12"><path d="M3 5 V3.5 A2.5 2.5 0 0 1 8 3.5 V5" fill="none" stroke="#c8c8c8" stroke-width="1.4"/><rect x="1" y="5" width="9" height="6.5" fill="#c8c8c8"/><rect x="4.5" y="7" width="2" height="2.5" fill="#525252"/></svg></div></div>
 <div class="vline" style="left:26px"></div>
 <div id="track" class="abs"><div id="thumbv" class="abs"></div></div>
 <div id="pedge" class="abs"></div>
 <div id="pfoot" class="abs"><svg class="abs" style="left:59px;top:6px" width="14" height="8" viewBox="0 0 14 8"><path d="M5.4 1 H3.6 A3 3 0 0 0 3.6 7 H5.4 M8.6 1 H10.4 A3 3 0 0 1 10.4 7 H8.6" fill="none" stroke="#b8b8b8" stroke-width="1.5"/><path d="M4 4 H10" stroke="#b8b8b8" stroke-width="1.5"/></svg>
<span class="abs" style="left:85px;top:1px;font-family:'Liberation Serif',serif;font-style:italic;font-weight:bold;font-size:13px;line-height:16px;color:#d8d8d8">fx</span>
<svg class="abs" style="left:109px;top:6px" width="13" height="8.5" viewBox="0 0 13 8.5"><rect width="13" height="8.5" fill="#dcdcdc"/><circle cx="6.5" cy="4.25" r="2.4" fill="#3c3c3c"/></svg>
<svg class="abs" style="left:131px;top:4px" width="12" height="12" viewBox="0 0 12 12"><circle cx="6" cy="6" r="4.8" fill="none" stroke="#d4d4d4" stroke-width="1.4"/><path d="M6 1 A5 5 0 0 0 6 11 Z" fill="#d4d4d4" transform="rotate(45 6 6)"/></svg>
<svg class="abs" style="left:154px;top:5px" width="13" height="10" viewBox="0 0 13 10"><path d="M0.5 0.5 H5 L6.5 2 H12.5 V9.5 H0.5 Z" fill="#cfcfcf"/></svg></div>
 <div id="pfoot2" class="abs"></div>
</div>
<svg class="abs" style="left:650px;top:460px" width="150" height="83" viewBox="650 460 150 83">
 <polygon points="669.7,501.2 800,473 800,543 660.3,543" fill="#fdfdfd"/>
 <polygon points="661,543 800,478 800,543" fill="#3eaee4"/>
 <text x="738" y="515.5" font-family="Liberation Mono, monospace" font-size="12.5" fill="#d5eefb" textLength="61">jb51.net</text>
 <text x="704" y="540.3" font-family="Noto Sans CJK SC, sans-serif" font-weight="300" font-size="24.5" fill="#e4f5fd">脚本之家</text>
</svg>
</div>
</body>
</html>
